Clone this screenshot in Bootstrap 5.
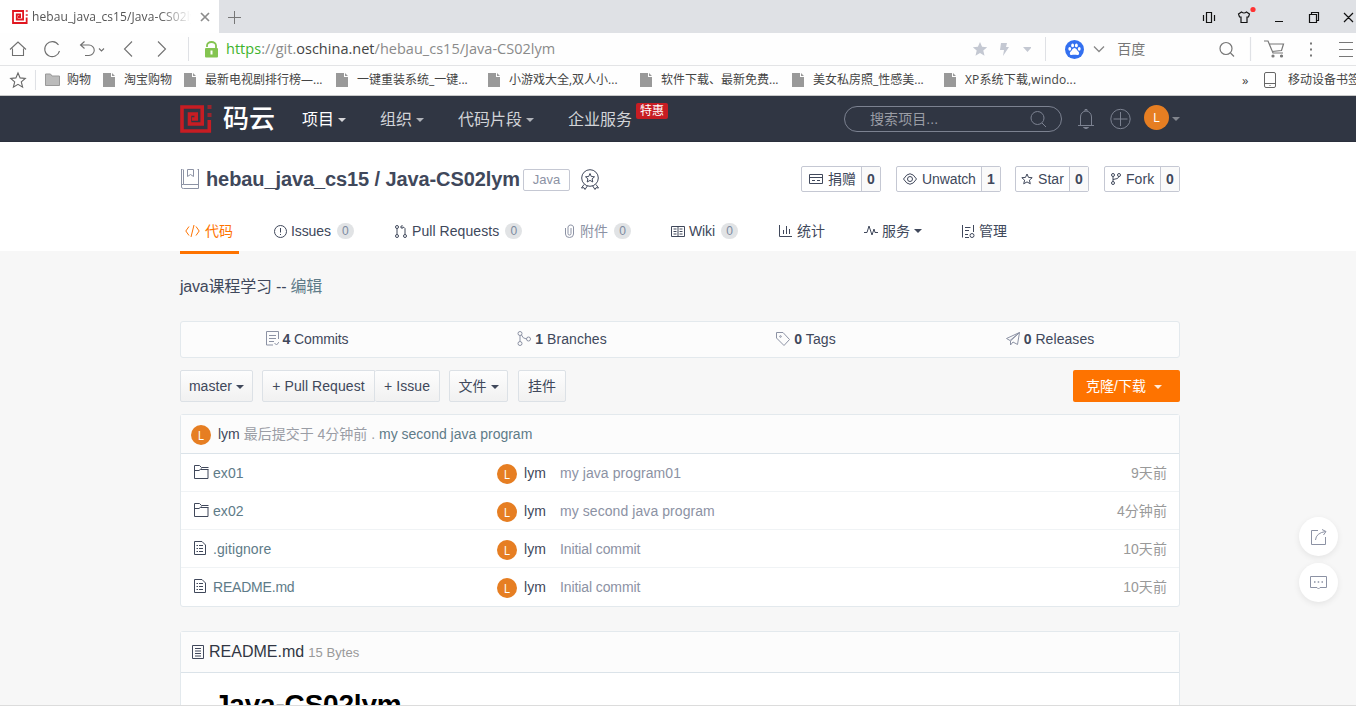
<!DOCTYPE html>
<html lang="zh-CN">
<head>
<meta charset="utf-8">
<title>hebau_java_cs15/Java-CS02lym</title>
<link href="https://cdn.jsdelivr.net/npm/bootstrap@5.3.0/dist/css/bootstrap.min.css" rel="stylesheet">
<style>
:root{--ink:#40485b;--soft:#8c92a4;--link:#5e7b88;--line:#e3e9ed}
body{font-family:"Liberation Sans","Noto Sans CJK SC",sans-serif;font-size:14px;line-height:20px;letter-spacing:.07px;color:var(--ink);background:#fff;height:709px;overflow:hidden;fill:none;stroke:currentColor}
svg{flex:none;display:block}
a{text-decoration:none;color:inherit}
.chrome{font-family:"Open Sans","Noto Sans CJK SC",sans-serif;color:#555;letter-spacing:0;white-space:nowrap}
.tabstrip{height:33px;background:#dfe1e5}
.browser-tab{width:219px;height:33px;background:#fff;padding-left:12px}
.tab-title{width:159px;margin-left:4px;font-size:12px;letter-spacing:.1px;overflow:hidden;-webkit-mask-image:linear-gradient(90deg,#000 80%,transparent)}
.address{height:33px;border-bottom:1px solid #e3e4e6;background:#fefefe}
.address .url{font-size:14.5px;letter-spacing:.02px;width:748px;margin-left:8px;color:#8a8a8a}
.vline{width:1px;height:24px;background:#dfe1e5}
.marks{height:30px;border-bottom:1px solid #c9c9c9;font-size:12px;color:#444;background:#fefefe;padding-bottom:2px}
.marks>*{flex-shrink:0}
.marks .mk{width:152px;gap:9px}
.mk svg{color:#999}
.site{height:610px;overflow:hidden;background:#f7f7f7;border-bottom:1px solid #dcdcdc}
.wrap{width:1000px;margin-left:180px}
.topnav{height:46px;background:#303643;color:#d2d4d8;border-bottom:1px solid #2b303c}
.brand-word{font-size:26px;font-weight:500;color:#fff;line-height:36px;width:79px;padding-left:11px;letter-spacing:0;white-space:nowrap}
.topnav .menu{font-size:16px;letter-spacing:0;white-space:nowrap;padding-top:2px}
.topnav .tri{opacity:.8}
.tri{display:inline-block;border:4px solid transparent;border-top-color:currentColor;border-bottom:0;vertical-align:middle;margin-left:4px}
.hot{font-size:12px;line-height:16px;background:#c71d23;color:#fff;border-radius:2px;padding:0 4px;left:68px;top:-5px;letter-spacing:0}
.search{width:218px;height:26px;border:1px solid #7c8291;border-radius:13px;font-size:14px;color:#9a9da5;padding:0 14px 0 25px}
.face{border-radius:50%;background:#e67e22;color:#fff;text-align:center;flex:none;letter-spacing:0;font-family:"Open Sans",sans-serif}
.face-lg{width:25px;height:25px;line-height:25px;font-size:13px;margin-bottom:2px}
.face-sm{width:20px;height:20px;line-height:21px;font-size:12px;position:relative;top:1px}
.project{background:#fff;height:109px}
.title{font-size:20px;font-weight:700;letter-spacing:-.1px;margin-left:6px;width:317px;white-space:nowrap}
.lang{width:47px;height:22px;border:1px solid #c5c8d3;border-radius:2px;font-size:13px;line-height:20px;color:var(--soft);text-align:center}
.act{height:26px;border:1px solid #c5c8d3;border-radius:2px;line-height:24px;white-space:nowrap;background:#fff}
.act .lb{padding-left:7px;flex:1}
.act b{width:19px;border-left:1px solid #c5c8d3;text-align:center;background:#fafafa;letter-spacing:0}
.tabs{height:46px;white-space:nowrap}
.tabs a{height:46px;display:flex;align-items:center}
.tabs .on{width:59px;border-bottom:3px solid #fe7300;color:#fe7300;padding:3px 0 0 5px}
.cnt{height:16px;min-width:17px;border-radius:8px;background:#e1e3e5;color:#7c8aa0;font-size:12px;line-height:16px;text-align:center;margin-left:6px;letter-spacing:0}
.panel{border:1px solid var(--line);border-radius:3px;background:#fff}
.stats{height:37px;background:#fcfcfc;padding-bottom:2px}
.stats svg{color:var(--soft)}
.gbtn{height:32px;border:1px solid #dce1e6;border-radius:2px;background:linear-gradient(#fdfdfd,#f1f1f1);line-height:30px;text-align:center;white-space:nowrap}
.clone{width:107px;height:32px;line-height:32px;background:#fe7300;color:#fff;border-radius:2px;padding-left:13px;letter-spacing:0}
.head{background:#fcfcfc;border-bottom:1px solid #dbe3e9}
.file{height:38px;border-bottom:1px solid #f0f3f5;padding:0 12px 0 13px}
.file:last-child{border:0}
.file .nm{width:303px;color:var(--link)}
.tight{letter-spacing:-.1px}
.float-btn{width:39px;height:39px;border-radius:50%;background:#fff;box-shadow:0 2px 6px rgba(0,0,0,.08);left:1299px;color:var(--soft)}
</style>
</head>
<body>
<svg width="0" height="0" class="position-absolute">
<symbol id="gt" viewBox="0 0 32 28"><path d="M12 14H16.200V9H9.500V19H22.200V2H2V26H29.300V15" stroke="currentColor" stroke-width="3.600" fill="none"/><path d="M27.500 0h4v4h-4zM27.500 8h4v4h-4z" fill="currentColor" stroke="none" opacity=".7"/></symbol>
<symbol id="doc" viewBox="0 0 12 14"><path d="M0 0H8V4H12V14H0ZM9 0L12 3H9Z" fill="currentColor" stroke="none"/></symbol>
<symbol id="folder" viewBox="0 0 15 14"><path d="M.5 13.500V.5H5.500L7.500 2.500H14.500M.5 5.500H5L7.500 3.500M7 4.500H14.500M.5 13.500H14V4.500"/></symbol>
<symbol id="file" viewBox="0 0 12 14"><path d="M.5.500H8L11.500 4V13.500H.5ZM2.500 4.500H4M5 4.500H9M2.500 7.500H4M5 7.500H9M2.500 10.500H4M5 10.500H9"/></symbol>
</svg>

<header class="chrome">
  <div class="tabstrip d-flex align-items-center">
    <div class="browser-tab d-flex align-items-center">
      <svg width="16" height="14" style="color:#e0161f"><use href="#gt"/></svg>
      <span class="tab-title">hebau_java_cs15/Java-CS02lym</span>
      <svg style="margin-left:7px" width="12" height="10" viewBox="0 0 12 10" stroke="#8c8c8c" stroke-width="1.700"><path d="M3 1l8 8M11 1l-8 8"/></svg>
    </div>
    <svg class="ms-2" width="14" height="14" stroke="#777" viewBox="0 0 14 14"><path d="M7.500 1v13M1 7.500h13"/></svg>
    <div class="flex-fill"></div>
    <svg width="154" height="24" viewBox="0 0 154 24" stroke="#111" stroke-width="1.200"><path d="M1.500 10v6M12.500 10v6M4.500 7.500h5v10h-5zM36.500 9l3-2q2.500 2 5 0l3 2-1 3h-1.500v5.500h-6v-5.500H37.500zM73 16.500h8M107.500 9.500h7v8h-7zM109.500 9V7.500h7v8h-1.500M142 8l9 9M151 8l-9 9"/><circle cx="51" cy="4.500" r="2.600" fill="#f33" stroke="none"/></svg>
  </div>
  <div class="address d-flex align-items-center">
    <svg width="188" height="24" viewBox="0 0 188 24" stroke="#707070" stroke-width="1.100"><path d="M10 12.500L18 5l8 7.500M12.500 11.500v7h11v-7M58.500 8a7.500 7.500 0 1 0 1 6M84.500 4.500l-4 3.500 4 3.500M81 8h8a5.200 5.200 0 0 1 0 10.500h-4M99 11.500l2.500 2.500 2.500-2.500M132 4.500l-7.500 7.500 7.500 7.500M158 4.500l7.500 7.500-7.500 7.500"/></svg>
    <i class="vline"></i>
    <svg style="margin-left:16px" width="13" height="17" viewBox="0 0 13 17" stroke="none"><path d="M2 6V4.500a4.500 3.500 0 0 1 9 0V8" stroke="#84c450" stroke-width="1.800"/><rect y="7" width="13" height="9.500" rx="1" fill="#84c450"/><path d="M6.500 9.500v4" stroke="#fff" stroke-width="2"/></svg>
    <span class="url"><span style="color:#3eb32c">https</span>://git.<span style="color:#444">oschina.net</span>/hebau_cs15/Java-CS02lym</span>
    <svg width="59" height="16" viewBox="0 0 59 16" fill="#c4c8d2" stroke="none"><path d="M8 1l2.100 4.700 5.100.5-3.900 3.400 1.200 5.100L8 12.100l-4.500 2.600 1.200-5.100L.8 6.200l5.100-.5zM29 2h6l-1 4h3l-6 9 1-6h-4zM51 6h9l-4.500 5z"/></svg>
    <i class="vline" style="margin-left:14px"></i>
    <svg style="margin-left:19px" width="19" height="19" viewBox="0 0 20 20"><circle cx="10" cy="10" r="10" fill="#3370f0" stroke="none"/><g fill="#fff" stroke="none"><ellipse cx="5" cy="9.300" rx="1.500" ry="2"/><ellipse cx="8" cy="5.700" rx="1.500" ry="2"/><ellipse cx="12" cy="5.700" rx="1.500" ry="2"/><ellipse cx="15" cy="9.300" rx="1.500" ry="2"/><path d="M10 8.500c2 0 2.500 2.500 4 3.500s1 4-1 3.800-4-.300-6 0-2.500-2.800-1-3.800 2-3.500 4-3.500"/></g></svg>
    <svg style="margin-left:9px" width="12" height="8" viewBox="0 0 12 8" stroke="#888" stroke-width="1.300"><path d="M1 1.500l5 5 5-5"/></svg>
    <span style="margin-left:12px;width:102px;font-size:14px;color:#777">百度</span>
    <svg width="137" height="24" viewBox="0 0 137 24" stroke="#777" stroke-width="1.200"><circle cx="7" cy="11.500" r="6"/><path d="M11.500 16l3.500 3.500M45 4h4l5 12h10M50.500 7h14l-2 6.500-9.500 1"/><circle cx="54" cy="19" r="1" fill="#777"/><circle cx="62.500" cy="19" r="1" fill="#777"/><path d="M31.500 0v24" stroke="#dfe1e5"/><path d="M92 5.500v2M92 11.500v2M92 17.500v2" stroke-width="2"/><path d="M120 5.500h14M120 12.500h14M120 19.500h14"/></svg>
  </div>
  <div class="marks d-flex align-items-center">
    <svg width="36" height="20" viewBox="0 0 36 20" stroke="#666" stroke-width="1.100"><path d="M18 3l2.100 4.900 5.200.5-4 3.500 1.300 5.200-4.600-2.700-4.600 2.700 1.300-5.200-4-3.500 5.200-.5z"/><path d="M35.500 0v20" stroke="#dfe1e5"/></svg>
    <svg style="margin-left:9px" width="15" height="13" viewBox="0 0 15 13"><path d="M.5 12.500V1h5l1.500 2H14.500v9.500z" fill="#bbb" stroke="#999"/></svg>
    <span style="width:36px;margin-left:7px">购物</span>
    <div class="mk d-flex align-items-center" style="width:81px"><svg width="12" height="14"><use href="#doc"/></svg>淘宝购物</div>
    <div class="mk d-flex align-items-center"><svg width="12" height="14"><use href="#doc"/></svg>最新电视剧排行榜—...</div>
    <div class="mk d-flex align-items-center"><svg width="12" height="14"><use href="#doc"/></svg>一键重装系统_一键...</div>
    <div class="mk d-flex align-items-center"><svg width="12" height="14"><use href="#doc"/></svg>小游戏大全,双人小...</div>
    <div class="mk d-flex align-items-center"><svg width="12" height="14"><use href="#doc"/></svg>软件下载、最新免费...</div>
    <div class="mk d-flex align-items-center"><svg width="12" height="14"><use href="#doc"/></svg>美女私房照_性感美...</div>
    <div class="mk d-flex align-items-center" style="letter-spacing:.15px"><svg width="12" height="14"><use href="#doc"/></svg>XP系统下载,windo...</div>
    <span style="margin-left:146px;width:22px;font-size:13px">»</span>
    <svg width="12" height="16" viewBox="0 0 12 16" stroke="#666"><rect x=".5" y=".5" width="11" height="15" rx="1.500"/><path d="M1 11.500h10M5.500 13.500h1"/></svg>
    <span style="margin-left:12px">移动设备书签</span>
  </div>
</header>

<main class="site position-relative">
  <nav class="topnav">
    <div class="wrap d-flex align-items-center h-100">
      <svg width="32" height="28" style="color:#c71d23"><use href="#gt"/></svg>
      <span class="brand-word">码云</span>
      <a class="menu text-white" style="width:78px;margin-left:11px">项目<i class="tri"></i></a>
      <a class="menu" style="width:78px">组织<i class="tri"></i></a>
      <a class="menu" style="width:110px">代码片段<i class="tri"></i></a>
      <a class="menu position-relative" style="width:276px">企业服务<span class="hot position-absolute">特惠</span></a>
      <div class="search d-flex align-items-center justify-content-between flex-shrink-0"><span>搜索项目...</span><svg width="17" height="18" viewBox="0 0 17 18" stroke="#7c8291"><circle cx="7.500" cy="8" r="6.500"/><path d="M12 13l4 4"/></svg></div>
      <svg style="margin-left:15px;color:#7c8291" width="18" height="22" viewBox="0 0 18 22"><path d="M1 17.500h16M3.500 17V9a5.500 6 0 0 1 11 0v8M8 3V1.500h2V3M6.500 19.500q2.500 2.500 5 0z"/></svg>
      <svg style="margin-left:15px;color:#7c8291" width="21" height="22" viewBox="0 0 21 22"><circle cx="10.500" cy="11" r="9.700"/><path d="M10.500 4v14M3.500 11h14"/></svg>
      <span class="face face-lg" style="margin-left:13px">L</span><i class="tri flex-shrink-0" style="margin-left:3px;opacity:.5"></i>
    </div>
  </nav>

  <section class="project">
    <div class="wrap">
      <div class="d-flex align-items-center" style="height:75px">
        <svg width="20" height="20" viewBox="0 0 20 20" style="color:var(--soft);margin-bottom:2px"><path d="M3 0H1.500V18q0 1.500 2 1.500H18.500V0H17M3.500.5V15.500H18.500M1.500 17v-1.500h2M7.500.5h6v7l-3-2-3 2z"/></svg>
        <h1 class="title mb-0 lh-sm">hebau_java_cs15 / Java-CS02lym</h1>
        <span class="lang">Java</span>
        <svg style="margin-left:10px" width="20" height="21" viewBox="0 0 20 21"><circle cx="10" cy="9" r="8.300"/><path d="M10 4.500l1.300 3 3.200.3-2.400 2.100.7 3.100-2.800-1.600-2.800 1.600.7-3.100-2.400-2.100 3.200-.3zM4 15.500L1.500 19l2.500-.3L5 20.500l2.500-3.800M16 15.500l2.500 3.500-2.500-.3-1 1.800-2.500-3.800"/></svg>
        <div class="ms-auto d-flex" style="margin-bottom:2px">
          <div class="act d-flex" style="width:80px"><span class="lb d-flex align-items-center" style="gap:5px"><svg width="14" height="10" viewBox="0 0 14 10"><path d="M.5.500h13v9H.5zM.5 3.500h13M3 6.500h3M8 6.500h3"/></svg>捐赠</span><b>0</b></div>
          <div class="act d-flex" style="width:105px;margin-left:15px"><span class="lb d-flex align-items-center tight" style="gap:5px;padding-left:6px"><svg width="14" height="12" viewBox="0 0 14 12"><path d="M.5 6Q7-4.500 13.500 6 7 16.500.5 6z"/><circle cx="7" cy="6" r="2.500"/></svg>Unwatch</span><b>1</b></div>
          <div class="act d-flex" style="width:74px;margin-left:14px"><span class="lb d-flex align-items-center" style="gap:5px;padding-left:5px"><svg width="12" height="12" viewBox="0 0 12 12"><path d="M6 1l1.500 3.400 3.700.3-2.800 2.500.9 3.600L6 8.900l-3.300 1.900.9-3.600L.8 4.700l3.700-.3z"/></svg>Star</span><b>0</b></div>
          <div class="act d-flex" style="width:76px;margin-left:15px"><span class="lb d-flex align-items-center" style="gap:5px;padding-left:6px"><svg width="10" height="12" viewBox="0 0 10 12"><circle cx="2" cy="2" r="1.500"/><circle cx="8" cy="2" r="1.500"/><circle cx="2" cy="10" r="1.500"/><path d="M2 3.500v5M8 3.500Q8 6 2 6.500"/></svg>Fork</span><b>0</b></div>
        </div>
      </div>
      <div class="tabs d-flex" style="margin-top:-9px">
        <a class="on"><svg style="margin-right:5px" width="15" height="12" viewBox="0 0 15 12"><path d="M4 1.500L.8 6 4 10.500M11 1.500L14.200 6 11 10.500M9 0L6 12"/></svg>代码</a>
        <a class="tight" style="width:121px;margin-left:35px"><svg width="13" height="13" viewBox="0 0 13 13" style="margin-right:4px"><circle cx="6.500" cy="6.500" r="6"/><path d="M6.500 3v4.500M6.500 9v1"/></svg>Issues<span class="cnt">0</span></a>
        <a style="width:170px"><svg width="12" height="13" viewBox="0 0 12 13" style="margin-right:5px"><circle cx="2" cy="2" r="1.500"/><circle cx="2" cy="11" r="1.500"/><circle cx="10" cy="11" r="1.500"/><path d="M2 3.500v6M10 9.500V3.500q0-1.500-4-1.500M7.500 0l-2 2 2 2"/></svg>Pull Requests<span class="cnt">0</span></a>
        <a style="width:106px;color:#8c92a4"><svg width="9" height="14" viewBox="0 0 9 14" style="margin-right:6px"><path d="M.5 4v6a4 3.500 0 0 0 8 0V3a2.800 2.500 0 0 0-5.500 0v6.500a1.500 1.500 0 0 0 3 0V4"/></svg>附件<span class="cnt">0</span></a>
        <a style="width:108px"><svg width="14" height="11" viewBox="0 0 14 11" style="margin-right:4px"><path d="M.5.500h13v10H.5zM7 .5v10M2.500 3h3M2.500 5.500h3M2.500 8h3M8.500 3h3M8.500 5.500h3M8.500 8h3"/></svg><span class="tight">Wiki</span><span class="cnt">0</span></a>
        <a style="width:85px"><svg width="13" height="12" viewBox="0 0 13 12" style="margin-right:5px"><path d="M.5 0v11.500H13M4.500 9V5M7.500 9V1M10.500 9V4"/></svg>统计</a>
        <a style="width:98px"><svg width="14" height="12" viewBox="0 0 14 12" style="margin-right:4px"><path d="M0 7.500h3L5 1l3 9 2-6 1 3.500h3"/></svg>服务<i class="tri"></i></a>
        <a><svg width="13" height="13" viewBox="0 0 13 13" style="margin-right:4px"><path d="M.5 0v12.500M3 2.500h5.500M3 5.500h4M3 12.500h4M3 9.500h3M11.500 0v7"/><circle cx="10" cy="10.500" r="2"/></svg>管理</a>
      </div>
    </div>
  </section>

  <div class="wrap">
    <p class="mb-0" style="font-size:16px;padding-top:26px;height:70px;letter-spacing:-.2px">java课程学习 -- <a style="color:var(--link)">编辑</a></p>
    <div class="panel stats d-flex text-nowrap">
      <div class="d-flex align-items-center justify-content-center gap-1" style="width:252px"><svg width="13" height="15" viewBox="0 0 13 15"><path d="M12.500 8V.5H.5v13.500H7M3 4.500h7M3 7.500h7M3 10.500h5M8.500 12l2 2 3-3.500"/></svg><span class="tight"><b>4</b> Commits</span></div>
      <div class="d-flex align-items-center justify-content-center gap-1" style="width:258px"><svg width="14" height="15" viewBox="0 0 14 15"><circle cx="3" cy="2.500" r="2"/><circle cx="3" cy="12.500" r="2"/><circle cx="11.500" cy="8" r="2"/><path d="M3 4.500v6M4.500 4q1 3.500 5 4"/></svg><span><b>1</b> Branches</span></div>
      <div class="d-flex align-items-center justify-content-center gap-1" style="width:230px"><svg width="14" height="14" viewBox="0 0 14 14"><path d="M.5.500H7L13.500 7.500 8 13.500.5 6z"/><circle cx="4.500" cy="4.500" r=".8"/></svg><span><b>0</b> Tags</span></div>
      <div class="d-flex align-items-center justify-content-center gap-1" style="width:258px"><svg width="14" height="14" viewBox="0 0 14 14"><path d="M13.500.5L.5 6.500 4 8.500zL4.500 9v4l2.500-3 4.500 2.500z"/></svg><span><b>0</b> Releases</span></div>
    </div>
    <div class="d-flex" style="margin:12px 0">
      <div class="gbtn" style="width:73px">master<i class="tri"></i></div>
      <div class="gbtn rounded-end-0" style="width:113px;margin-left:9px">+ Pull Request</div>
      <div class="gbtn border-start-0" style="width:65px">+ Issue</div>
      <div class="gbtn" style="width:59px;margin-left:9px">文件<i class="tri"></i></div>
      <div class="gbtn" style="width:48px;margin-left:10px">挂件</div>
      <div class="clone ms-auto">克隆/下载<i class="tri" style="margin-left:8px;opacity:.85"></i></div>
    </div>
    <div class="panel">
      <div class="head d-flex align-items-center" style="height:39px;padding-left:10px">
        <span class="face face-sm">L</span><span style="margin-left:7px;letter-spacing:0">lym <span style="color:#9a9da5">最后提交于 4分钟前 .</span> <span style="color:var(--link)">my second java program</span></span>
      </div>
      <div class="file d-flex align-items-center"><span class="nm d-flex align-items-center"><svg width="15" height="14" style="color:#40485b;margin:0 4px 2px 0"><use href="#folder"/></svg>ex01</span><span class="face face-sm">L</span><span style="width:36px;margin-left:7px">lym</span><span style="color:#8c92a4">my java program01</span><span class="ms-auto" style="color:#999">9天前</span></div>
      <div class="file d-flex align-items-center"><span class="nm d-flex align-items-center"><svg width="15" height="14" style="color:#40485b;margin:0 4px 2px 0"><use href="#folder"/></svg>ex02</span><span class="face face-sm">L</span><span style="width:36px;margin-left:7px">lym</span><span style="color:#8c92a4">my second java program</span><span class="ms-auto" style="color:#999">4分钟前</span></div>
      <div class="file d-flex align-items-center"><span class="nm d-flex align-items-center"><svg width="12" height="14" style="color:#40485b;margin:0 7px 2px 0"><use href="#file"/></svg>.gitignore</span><span class="face face-sm">L</span><span style="width:36px;margin-left:7px">lym</span><span class="tight" style="color:#8c92a4">Initial commit</span><span class="ms-auto" style="color:#999">10天前</span></div>
      <div class="file d-flex align-items-center"><span class="nm d-flex align-items-center"><svg width="12" height="14" style="color:#40485b;margin:0 7px 2px 0"><use href="#file"/></svg><span style="letter-spacing:-.2px">README.md</span></span><span class="face face-sm">L</span><span style="width:36px;margin-left:7px">lym</span><span class="tight" style="color:#8c92a4">Initial commit</span><span class="ms-auto" style="color:#999">10天前</span></div>
    </div>
    <div class="panel" style="margin-top:24px;height:200px">
      <div class="head d-flex align-items-center" style="height:41px;padding-left:11px">
        <svg width="12" height="14" viewBox="0 0 12 14"><path d="M.5.500h11v13H.5zM3 3.500h6M3 6h6M3 8.500h6M3 11h6"/></svg>
        <span style="font-size:16px;color:#303643;margin-left:5px;letter-spacing:0">README.md</span><span style="font-size:13px;color:#999;margin:2px 0 0 4px">15 Bytes</span>
      </div>
      <h2 class="mb-0 fw-bold text-black" style="font-size:28px;line-height:34px;padding:15px 0 0 33px;letter-spacing:-.2px">Java-CS02lym</h2>
    </div>
  </div>

  <a class="float-btn position-absolute d-flex align-items-center justify-content-center" style="top:421px"><svg width="16" height="16" viewBox="0 0 16 16"><path d="M7 1.500H.5v14h14V8M4.500 11Q5 4 14.500 2.500M11 .5l4 2-2.500 3.500"/></svg></a>
  <a class="float-btn position-absolute d-flex align-items-center justify-content-center" style="top:467px"><svg width="17" height="14" viewBox="0 0 17 14"><path d="M.5.500h16v11H10L8.500 13 7 11.500H.5z"/><path d="M4 6h1.500M7.700 6h1.500M11.500 6H13" stroke-width="1.500"/></svg></a>
</main>
<script src="https://cdn.jsdelivr.net/npm/bootstrap@5.3.0/dist/js/bootstrap.bundle.min.js"></script>
</body>
</html>
